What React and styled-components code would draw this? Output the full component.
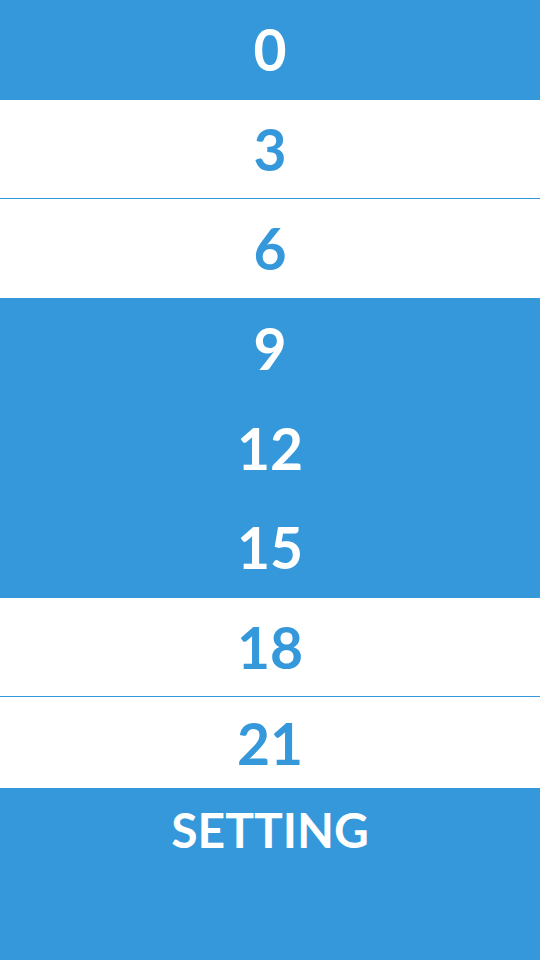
import React from "react";
import styled, { createGlobalStyle } from "styled-components";

const BLUE = "#3498db";

const GlobalStyle = createGlobalStyle`
  html, body {
    margin: 0;
    padding: 0;
    background: #ffffff;
  }
  body {
    font-family: Lato, "Open Sans", sans-serif;
  }
`;

const Screen = styled.div`
  width: 540px;
  height: 960px;
  display: flex;
  flex-direction: column;
  overflow: hidden;
  background: ${BLUE};
`;

const Row = styled.div`
  box-sizing: border-box;
  flex: none;
  height: ${(p) => p.$h || 99.6}px;
  display: flex;
  align-items: center;
  justify-content: center;
  background: ${(p) => (p.$active ? BLUE : "#ffffff")};
  color: ${(p) => (p.$active ? "#ffffff" : BLUE)};
  border-bottom: 1px solid ${BLUE};
  font-family: Lato, sans-serif;
  font-weight: 700;
  font-size: 57px;
  line-height: 1;
  padding-top: 1px;
`;

const Footer = styled.div`
  flex: 1;
  background: ${BLUE};
`;

const SettingButton = styled.div`
  height: 82px;
  display: flex;
  align-items: center;
  justify-content: center;
  color: #ffffff;
  font-family: Lato, sans-serif;
  font-weight: 700;
  font-size: 48px;
  letter-spacing: 0;
`;

const hours = [
  { value: 0, active: true },
  { value: 3, active: false },
  { value: 6, active: false },
  { value: 9, active: true },
  { value: 12, active: true },
  { value: 15, active: true },
  { value: 18, active: false },
  { value: 21, active: false, h: 91.8 },
];

export default function App() {
  return (
    <>
      <GlobalStyle />
      <Screen>
        {hours.map((item) => (
          <Row key={item.value} $active={item.active} $h={item.h}>
            {item.value}
          </Row>
        ))}
        <Footer>
          <SettingButton>SETTING</SettingButton>
        </Footer>
      </Screen>
    </>
  );
}
